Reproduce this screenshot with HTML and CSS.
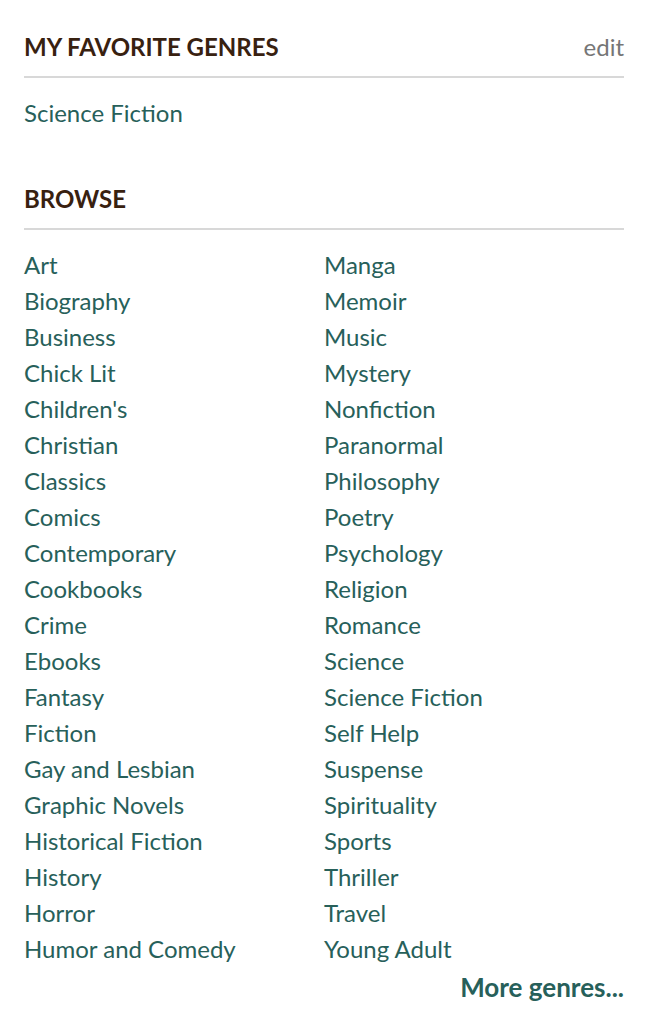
FILE: index.html
```html
<!DOCTYPE html>
<html>
<head>
<meta charset="utf-8">
<link rel="stylesheet" href="styles.css">
</head>
<body>
<div class="panel">
  <section class="block">
    <div class="block-head">
      <h2 class="block-title">MY FAVORITE GENRES</h2>
      <a class="edit" href="#">edit</a>
    </div>
    <div class="fav"><a class="genre" href="#">Science Fiction</a></div>
  </section>
  <section class="block browse">
    <div class="block-head">
      <h2 class="block-title">BROWSE</h2>
    </div>
    <div class="cols">
      <ul class="col">
        <li><a class="genre" href="#">Art</a></li>
        <li><a class="genre" href="#">Biography</a></li>
        <li><a class="genre" href="#">Business</a></li>
        <li><a class="genre" href="#">Chick Lit</a></li>
        <li><a class="genre" href="#">Children's</a></li>
        <li><a class="genre" href="#">Christian</a></li>
        <li><a class="genre" href="#">Classics</a></li>
        <li><a class="genre" href="#">Comics</a></li>
        <li><a class="genre" href="#">Contemporary</a></li>
        <li><a class="genre" href="#">Cookbooks</a></li>
        <li><a class="genre" href="#">Crime</a></li>
        <li><a class="genre" href="#">Ebooks</a></li>
        <li><a class="genre" href="#">Fantasy</a></li>
        <li><a class="genre" href="#">Fiction</a></li>
        <li><a class="genre" href="#">Gay and Lesbian</a></li>
        <li><a class="genre" href="#">Graphic Novels</a></li>
        <li><a class="genre" href="#">Historical Fiction</a></li>
        <li><a class="genre" href="#">History</a></li>
        <li><a class="genre" href="#">Horror</a></li>
        <li><a class="genre" href="#">Humor and Comedy</a></li>
      </ul>
      <ul class="col">
        <li><a class="genre" href="#">Manga</a></li>
        <li><a class="genre" href="#">Memoir</a></li>
        <li><a class="genre" href="#">Music</a></li>
        <li><a class="genre" href="#">Mystery</a></li>
        <li><a class="genre" href="#">Nonfiction</a></li>
        <li><a class="genre" href="#">Paranormal</a></li>
        <li><a class="genre" href="#">Philosophy</a></li>
        <li><a class="genre" href="#">Poetry</a></li>
        <li><a class="genre" href="#">Psychology</a></li>
        <li><a class="genre" href="#">Religion</a></li>
        <li><a class="genre" href="#">Romance</a></li>
        <li><a class="genre" href="#">Science</a></li>
        <li><a class="genre" href="#">Science Fiction</a></li>
        <li><a class="genre" href="#">Self Help</a></li>
        <li><a class="genre" href="#">Suspense</a></li>
        <li><a class="genre" href="#">Spirituality</a></li>
        <li><a class="genre" href="#">Sports</a></li>
        <li><a class="genre" href="#">Thriller</a></li>
        <li><a class="genre" href="#">Travel</a></li>
        <li><a class="genre" href="#">Young Adult</a></li>
      </ul>
    </div>
    <div class="more"><a href="#">More genres...</a></div>
  </section>
</div>
</body>
</html>
```
FILE: styles.css
```css
* { box-sizing: border-box; }
body {
  margin: 0;
  background: #ffffff;
  font-family: Lato, "Liberation Sans", sans-serif;
}
a { text-decoration: none; }
.panel {
  width: 646px;
  padding: 32px 22px 0 24px;
}
.block-head {
  display: flex;
  justify-content: space-between;
  align-items: baseline;
  padding-bottom: 14px;
  border-bottom: 2px solid #d8d8d8;
}
.block-title {
  margin: 0;
  font-size: 24px;
  line-height: 30px;
  font-weight: 700;
  color: #382110;
}
.edit {
  font-size: 24px;
  line-height: 30px;
  color: #767676;
}
.genre {
  color: #27605a;
  font-size: 24px;
  line-height: 36px;
}
.fav {
  margin-top: 17px;
  height: 36px;
  line-height: 36px;
}
.browse {
  margin-top: 53px;
}
.cols {
  margin-top: 17px;
  display: grid;
  grid-template-columns: 300px 1fr;
}
.col {
  list-style: none;
  margin: 0;
  padding: 0;
}
.col li {
  line-height: 36px;
  height: 36px;
}
.more {
  margin-top: 5px;
  text-align: right;
  line-height: 30px;
}
.more a {
  font-size: 26px;
  font-weight: 700;
  color: #27605a;
}
```
